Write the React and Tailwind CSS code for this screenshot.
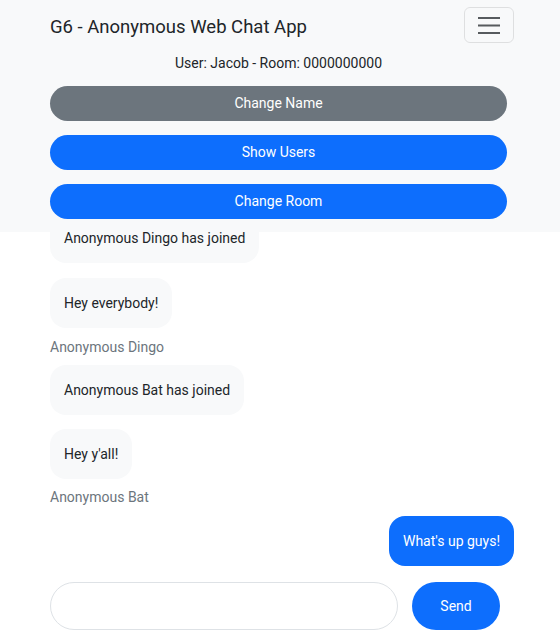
import React from "react";

function Bubble({ children, className = "" }) {
  return (
    <div className={`self-start rounded-[16px] bg-[#f8f9fa] px-[14px] py-[14px] text-[14px] leading-[22px] text-[#212529] ${className}`}>
      {children}
    </div>
  );
}

function Label({ children, className = "" }) {
  return <div className={`text-[14px] leading-[22px] text-[#6c757d] ${className}`}>{children}</div>;
}

export default function App() {
  return (
    <div className="flex h-[634px] flex-col overflow-hidden bg-white font-['Roboto',sans-serif] text-[#212529]">
      <header className="relative z-10 shrink-0 bg-[#f8f9fa] pb-[13px] pl-[50px] pr-[46px]">
        <div className="flex items-center justify-between pt-[7px]">
          <div className="mt-[3px] text-[18.5px] leading-[30px] text-[#212529]">G6 - Anonymous Web Chat App</div>
          <button className="flex h-[36px] w-[50px] items-center justify-center rounded-[6px] border border-[rgba(0,0,0,0.1)]">
            <svg width="22" height="17" viewBox="0 0 22 17">
              <path d="M0 2h22M0 9.5h22M0 17h22" stroke="rgba(33,37,41,0.75)" strokeWidth="2" transform="translate(0,-1)" />
            </svg>
          </button>
        </div>
        <div className="mt-[10px] w-[457px] text-center text-[14px] leading-[21px]">User: Jacob - Room: 0000000000</div>
        <div className="mt-[12px] flex w-[457px] flex-col gap-[14px]">
          <button className="h-[35px] rounded-full bg-[#6c757d] text-[14px] text-white">Change Name</button>
          <button className="h-[35px] rounded-full bg-[#0d6efd] text-[14px] text-white">Show Users</button>
          <button className="h-[35px] rounded-full bg-[#0d6efd] text-[14px] text-white">Change Room</button>
        </div>
      </header>

      <main className="flex min-h-0 flex-1 flex-col justify-end overflow-hidden pb-[16px] pl-[50px] pr-[46px]">
        <Bubble>Anonymous Dingo has joined</Bubble>
        <Bubble className="mt-[15px]">Hey everybody!</Bubble>
        <Label className="mt-[8px]">Anonymous Dingo</Label>
        <Bubble className="mt-[7px]">Anonymous Bat has joined</Bubble>
        <Bubble className="mt-[14px]">Hey y'all!</Bubble>
        <Label className="mt-[7px]">Anonymous Bat</Label>
        <div className="mt-[8px] self-end rounded-[16px] bg-[#0d6efd] px-[14px] py-[14px] text-[14px] leading-[22px] text-white">
          What's up guys!
        </div>
      </main>

      <div className="flex shrink-0 gap-[14px] pb-[4px] pl-[50px]">
        <input className="h-[48px] w-[348px] rounded-full border border-[#dee2e6] bg-white px-4 text-[14px] outline-none" />
        <button className="h-[48px] w-[88px] rounded-full bg-[#0d6efd] text-[14px] text-white">Send</button>
      </div>
    </div>
  );
}
